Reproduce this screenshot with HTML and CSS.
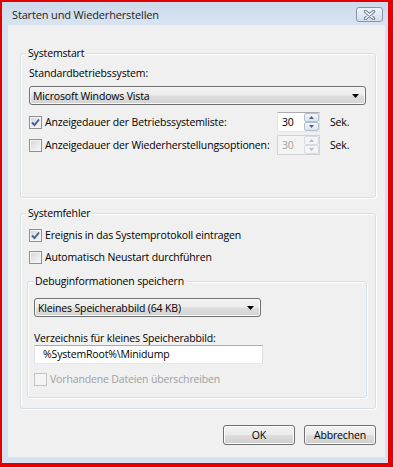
FILE: index.html
```html
<!DOCTYPE html>
<html lang="de">
<head>
  <meta charset="UTF-8" />
  <meta name="viewport" content="width=device-width, initial-scale=1.0"/>
  <title>Starten und Wiederherstellen</title>
  <link rel="stylesheet" href="styles.css">
</head>
<body>
  <div class="window">
    <div class="titlebar">
      <span class="title">Starten und Wiederherstellen</span>
      <button class="close" title="Schließen">
        <svg width="13" height="10" viewBox="0 0 13 10">
          <path d="M2.5 1.5 L10.5 8.5 M10.5 1.5 L2.5 8.5" stroke="#6b7b96" stroke-width="3.4" stroke-linecap="round"/>
          <path d="M2.5 1.5 L10.5 8.5 M10.5 1.5 L2.5 8.5" stroke="#ffffff" stroke-width="1.6" stroke-linecap="round"/>
        </svg>
      </button>
    </div>

    <div class="client">
      <div class="group">
        <div class="group-title">Systemstart</div>
        <div class="field-label">Standardbetriebssystem:</div>
        <div class="combo">
          <span>Microsoft Windows Vista</span>
          <svg width="7" height="4" viewBox="0 0 7 4"><path d="M0 0 H7 L3.5 4 Z" fill="#000"/></svg>
        </div>

        <div class="timer-grid">
          <label class="check">
            <span class="box"><svg width="9" height="9" viewBox="0 0 9 9"><path d="M1 4.5 L3.5 7 L8 1.5" fill="none" stroke="#4a5d92" stroke-width="1.9"/></svg></span>
            Anzeigedauer der Betriebssystemliste:
          </label>
          <div class="spin">
            <span class="spin-value">30</span>
            <span class="spin-buttons">
              <span><svg width="5" height="3" viewBox="0 0 5 3"><path d="M0 3 L2.5 0 L5 3 Z" fill="#4d6185"/></svg></span>
              <span><svg width="5" height="3" viewBox="0 0 5 3"><path d="M0 0 L2.5 3 L5 0 Z" fill="#4d6185"/></svg></span>
            </span>
          </div>
          <span class="unit">Sek.</span>

          <label class="check">
            <span class="box"></span>
            Anzeigedauer der Wiederherstellungsoptionen:
          </label>
          <div class="spin disabled">
            <span class="spin-value">30</span>
            <span class="spin-buttons">
              <span><svg width="5" height="3" viewBox="0 0 5 3"><path d="M0 3 L2.5 0 L5 3 Z" fill="#b5bdc8"/></svg></span>
              <span><svg width="5" height="3" viewBox="0 0 5 3"><path d="M0 0 L2.5 3 L5 0 Z" fill="#b5bdc8"/></svg></span>
            </span>
          </div>
          <span class="unit">Sek.</span>
        </div>
      </div>

      <div class="group second">
        <div class="group-title">Systemfehler</div>
        <div class="check-list">
          <label class="check">
            <span class="box"><svg width="9" height="9" viewBox="0 0 9 9"><path d="M1 4.5 L3.5 7 L8 1.5" fill="none" stroke="#4a5d92" stroke-width="1.9"/></svg></span>
            Ereignis in das Systemprotokoll eintragen
          </label>
          <label class="check">
            <span class="box"></span>
            Automatisch Neustart durchführen
          </label>
        </div>

        <div class="group inner">
          <div class="group-title">Debuginformationen speichern</div>
          <div class="combo small">
            <span>Kleines Speicherabbild (64 KB)</span>
            <svg width="7" height="4" viewBox="0 0 7 4"><path d="M0 0 H7 L3.5 4 Z" fill="#000"/></svg>
          </div>
          <div class="field-label dir">Verzeichnis für kleines Speicherabbild:</div>
          <div class="textbox">%SystemRoot%\Minidump</div>
          <label class="check disabled">
            <span class="box"></span>
            Vorhandene Dateien überschreiben
          </label>
        </div>
      </div>

      <div class="buttons">
        <button class="btn">OK</button>
        <button class="btn">Abbrechen</button>
      </div>
    </div>
  </div>
</body>
</html>
```

FILE: styles.css
```css
* {
  box-sizing: border-box;
}

body {
  margin: 0;
  height: 467px;
  overflow: hidden;
  background-color: #e30000;
  font-family: "Open Sans", "Noto Sans", sans-serif;
  font-size: 10.5px;
  letter-spacing: -0.15px;
  color: #000;
}

.window {
  margin: 2px 5px 4px 2px;
  height: 461px;
  background-color: #d6e2f0;
  display: flex;
  flex-direction: column;
}

.titlebar {
  height: 23px;
  display: flex;
  justify-content: space-between;
  align-items: flex-start;
  padding: 5px 5px 0 10px;
  background: linear-gradient(#ccdaec, #d9e4f1);
}

.title {
  font-size: 11px;
  line-height: 16px;
  color: #1e1e1e;
}

.close {
  width: 27px;
  height: 15px;
  padding: 0;
  border: 1px solid #8794ab;
  border-radius: 3px;
  background: linear-gradient(#eef3fa, #d2ddeb);
  display: flex;
  align-items: center;
  justify-content: center;
}

.client {
  flex: 1;
  margin: 0 3px 6px 6px;
  padding: 28px 9px 0 12px;
  background-color: #f0f0f0;
  display: flex;
  flex-direction: column;
}

.group {
  border: 1px solid #d5dfe5;
  border-radius: 3px;
  box-shadow: inset 1px 1px 0 #ffffff, 1px 1px 0 #ffffff;
  padding: 0 9px 42px 8px;
}

.group.second {
  margin-top: 15px;
  padding-bottom: 10px;
}

.group.inner {
  margin: 14px -1px 0 -2px;
  padding: 0 8px 8px 6px;
}

.group-title {
  width: fit-content;
  margin: -9px 0 0 -3px;
  padding: 0 2px;
  line-height: 16px;
  background-color: #f0f0f0;
}

.group.inner .group-title {
  margin-left: -1px;
}

.field-label {
  margin-top: 4px;
  line-height: 16px;
}

.field-label.dir {
  margin-top: 14px;
  line-height: 14px;
}

.combo {
  height: 19px;
  margin-top: 5px;
  padding: 0 6px 0 3px;
  display: flex;
  align-items: center;
  justify-content: space-between;
  border: 1px solid #707070;
  border-radius: 3px;
  background: linear-gradient(#f3f3f3 0%, #ececec 48%, #dedede 52%, #d2d2d2 100%);
  box-shadow: inset 0 0 0 1px #f8f8f8;
}

.combo.small {
  width: 227px;
  margin-top: 9px;
}

.timer-grid {
  display: grid;
  grid-template-columns: 248px 43px auto;
  grid-auto-rows: 20px;
  row-gap: 3px;
  align-items: center;
  margin-top: 7px;
}

.check-list {
  display: flex;
  flex-direction: column;
  gap: 2px;
  margin-top: 4px;
}

.check {
  height: 20px;
  display: flex;
  align-items: center;
  gap: 3px;
}

.box {
  width: 13px;
  height: 13px;
  flex: none;
  border: 1px solid #8e8f8f;
  background: linear-gradient(135deg, #d3d6da, #f7f8f9);
  box-shadow: inset 0 0 0 1px #f4f4f4;
  display: flex;
  align-items: center;
  justify-content: center;
}

.check.disabled {
  margin-top: 5px;
  color: #a0a0a0;
}

.check.disabled .box {
  border-color: #c4c4c4;
  background: #f4f4f4;
}

.spin {
  width: 43px;
  height: 20px;
  display: flex;
  border: 1px solid #abadb3;
  border-color: #abadb3 #dbdfe6 #e3e9ef #e2e3ea;
  background-color: #ffffff;
}

.spin-value {
  flex: 1;
  padding-left: 4px;
  line-height: 18px;
}

.spin-buttons {
  width: 15px;
  display: flex;
  flex-direction: column;
}

.spin-buttons span {
  flex: 1;
  border: 1px solid #b4bfcd;
  border-radius: 2px;
  background: linear-gradient(#f4f7fb, #dbe3ed);
  display: flex;
  align-items: center;
  justify-content: center;
}

.spin.disabled {
  background-color: #f4f4f4;
  border-color: #d0d2d6;
  color: #a0a0a0;
}

.spin.disabled .spin-buttons span {
  border-color: #d6dbe2;
  background: #f2f4f7;
}

.unit {
  margin-left: 10px;
}

.textbox {
  width: 229px;
  height: 19px;
  padding-left: 8px;
  line-height: 17px;
  border: 1px solid #abadb3;
  border-color: #abadb3 #dbdfe6 #e3e9ef #e2e3ea;
  background-color: #ffffff;
}

.buttons {
  display: flex;
  justify-content: flex-end;
  gap: 9px;
  margin-top: 16px;
}

.btn {
  width: 72px;
  height: 20px;
  padding: 0;
  font: inherit;
  letter-spacing: inherit;
  color: #000;
  border: 1px solid #707070;
  border-radius: 3px;
  background: linear-gradient(#f2f2f2 0%, #ebebeb 48%, #dddddd 52%, #cfcfcf 100%);
  box-shadow: inset 0 0 0 1px #fcfcfc;
}
```
